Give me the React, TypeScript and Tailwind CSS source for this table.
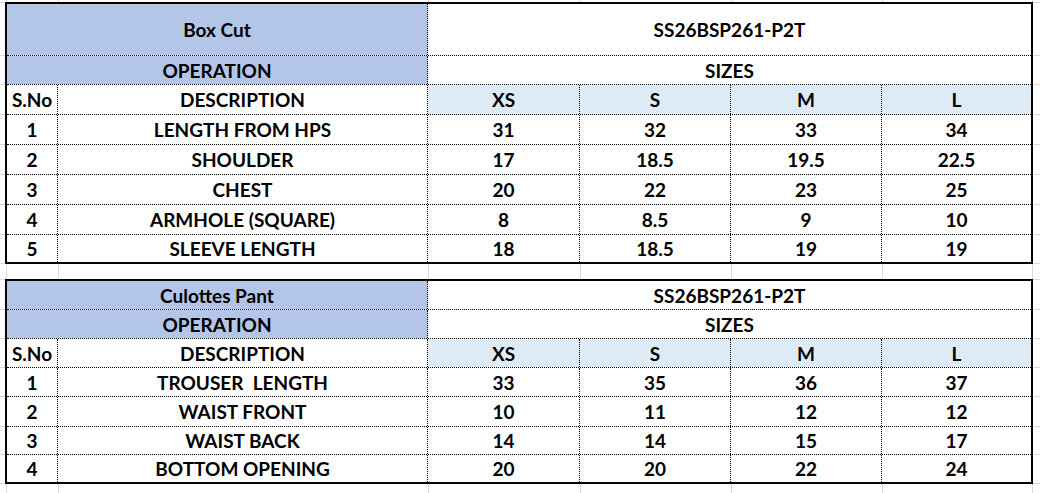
import React from 'react'

interface SizeRow {
    no: string,
    desc: string,
    values: string[],
    h: string,
}

interface SizeTableProps {
    title: string,
    code: string,
    titleH: string,
    opH: string,
    headH: string,
    rows: SizeRow[],
}

const COLS = 'grid grid-cols-[51px_370px_152px_151px_151px_149px]'
const SIZES = ['XS', 'S', 'M', 'L']

const boxCut: SizeTableProps = {
    title: 'Box Cut',
    code: 'SS26BSP261-P2T',
    titleH: 'h-[52px]',
    opH: 'h-[29px]',
    headH: 'h-[30px]',
    rows: [
        { no: '1', desc: 'LENGTH FROM HPS', values: ['31', '32', '33', '34'], h: 'h-[30px]' },
        { no: '2', desc: 'SHOULDER', values: ['17', '18.5', '19.5', '22.5'], h: 'h-[30px]' },
        { no: '3', desc: 'CHEST', values: ['20', '22', '23', '25'], h: 'h-[30px]' },
        { no: '4', desc: 'ARMHOLE (SQUARE)', values: ['8', '8.5', '9', '10'], h: 'h-[30px]' },
        { no: '5', desc: 'SLEEVE LENGTH', values: ['18', '18.5', '19', '19'], h: 'h-[27px]' },
    ],
}

const culottes: SizeTableProps = {
    title: 'Culottes Pant',
    code: 'SS26BSP261-P2T',
    titleH: 'h-[29px]',
    opH: 'h-[29px]',
    headH: 'h-[29px]',
    rows: [
        { no: '1', desc: 'TROUSER  LENGTH', values: ['33', '35', '36', '37'], h: 'h-[29px]' },
        { no: '2', desc: 'WAIST FRONT', values: ['10', '11', '12', '12'], h: 'h-[30px]' },
        { no: '3', desc: 'WAIST BACK', values: ['14', '14', '15', '17'], h: 'h-[28px]' },
        { no: '4', desc: 'BOTTOM OPENING', values: ['20', '20', '22', '24'], h: 'h-[27px]' },
    ],
}

// background spreadsheet gridlines between / around the tables
const GridStrip = ({ h }: { h: string }) => (
    <div className={`flex ${h}`}>
        <div className="w-[7px] shrink-0 border-r border-[#d9d9d9]" />
        <div className="w-[52px] shrink-0 border-r border-[#d9d9d9]" />
        <div className="w-[370px] shrink-0 border-r border-[#d9d9d9]" />
        <div className="w-[152px] shrink-0 border-r border-[#d9d9d9]" />
        <div className="w-[151px] shrink-0 border-r border-[#d9d9d9]" />
        <div className="w-[151px] shrink-0 border-r border-[#d9d9d9]" />
        <div className="w-[150px] shrink-0 border-r border-[#d9d9d9]" />
        <div className="flex-1" />
    </div>
)

const Gutter = ({ table, w }: { table: SizeTableProps, w: string }) => (
    <div className={`flex flex-col shrink-0 ${w}`}>
        <div className="h-[2px] border-t border-[#d9d9d9]" />
        <div className={`${table.titleH} border-b border-[#d9d9d9]`} />
        <div className={`${table.opH} border-b border-[#d9d9d9]`} />
        <div className={`${table.headH} border-b border-[#d9d9d9]`} />
        {table.rows.map((r, i) => (
            <div key={i} className={`${r.h} ${i < table.rows.length - 1 ? 'border-b border-[#d9d9d9]' : ''}`} />
        ))}
        <div className="h-[2px] border-b border-[#d9d9d9]" />
    </div>
)

const Cell = ({ children, className = '' }: { children?: React.ReactNode, className?: string }) => (
    <div className={`flex items-center justify-center whitespace-pre ${className}`}>
        {children}
    </div>
)

const SizeTable = (table: SizeTableProps) => {
    return (
        <div className="w-[1028px] shrink-0 border-2 border-black">
            <div className={`${COLS} ${table.titleH} border-b border-dotted border-black`}>
                <Cell className="col-span-2 bg-[#b4c6e7] border-r border-dotted border-black">{table.title}</Cell>
                <Cell className="col-span-4">{table.code}</Cell>
            </div>
            <div className={`${COLS} ${table.opH} border-b border-dotted border-black`}>
                <Cell className="col-span-2 bg-[#b4c6e7] border-r border-dotted border-black">OPERATION</Cell>
                <Cell className="col-span-4">SIZES</Cell>
            </div>
            <div className={`${COLS} ${table.headH} border-b border-dotted border-black`}>
                <Cell className="border-r border-dotted border-black">S.No</Cell>
                <Cell className="border-r border-dotted border-black">DESCRIPTION</Cell>
                {SIZES.map((s, i) => (
                    <Cell key={s} className={`bg-[#ddebf7] ${i < 3 ? 'border-r border-dotted border-black' : ''}`}>{s}</Cell>
                ))}
            </div>
            {table.rows.map((r, idx) => (
                <div key={r.no} className={`${COLS} ${r.h} ${idx < table.rows.length - 1 ? 'border-b border-dotted border-black' : ''}`}>
                    <Cell className="border-r border-dotted border-black">{r.no}</Cell>
                    <Cell className="border-r border-dotted border-black">{r.desc}</Cell>
                    {r.values.map((v, i) => (
                        <Cell key={i} className={i < 3 ? 'border-r border-dotted border-black' : ''}>{v}</Cell>
                    ))}
                </div>
            ))}
        </div>
    )
}

export default function App() {
    return (
        <div className="w-[1040px] h-[493px] overflow-hidden bg-white text-black font-['Lato','Liberation_Sans',sans-serif] font-bold text-[19px] leading-none">
            <GridStrip h="h-[2px]" />
            <div className="flex">
                <Gutter table={boxCut} w="w-[5px]" />
                <SizeTable {...boxCut} />
                <Gutter table={boxCut} w="w-[7px]" />
            </div>
            <GridStrip h="h-[15px]" />
            <div className="flex">
                <Gutter table={culottes} w="w-[5px]" />
                <SizeTable {...culottes} />
                <Gutter table={culottes} w="w-[7px]" />
            </div>
            <GridStrip h="h-[20px]" />
        </div>
    )
}
